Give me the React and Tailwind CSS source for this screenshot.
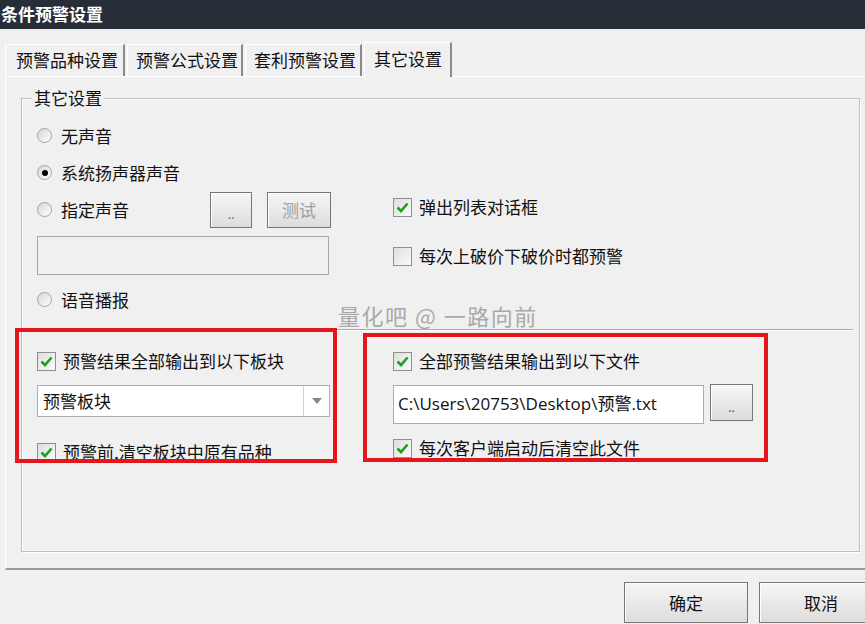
import React from "react";

const FONT = { fontFamily: '"Noto Sans CJK SC", "Noto Sans", sans-serif' };

const Radio = ({ checked, label }) => (
  <div className="flex items-center h-[37px]">
    <span className="w-[15px] h-[15px] rounded-full border border-[#a3a3a3] bg-gradient-to-br from-[#d6d6d6] to-white flex items-center justify-center">
      {checked && <span className="w-[6px] h-[6px] rounded-full bg-black" />}
    </span>
    <span className="ml-[9px] text-[17px] text-[#111]">{label}</span>
  </div>
);

const Check = ({ checked, label }) => (
  <div className="flex items-center h-[30px]">
    <span className="w-[19px] h-[19px] border border-[#8e8f8f] bg-gradient-to-br from-[#dedede] to-[#fbfbfb] flex items-center justify-center">
      {checked && (
        <svg width="13" height="11" viewBox="0 0 13 11">
          <path d="M1.5 5.5 L5 9 L11.5 1.5" fill="none" stroke="#1f9e1f" strokeWidth="2.6" />
        </svg>
      )}
    </span>
    <span className="ml-[7px] text-[17px] text-[#111]">{label}</span>
  </div>
);

const Btn = ({ children, className }) => (
  <button className={`border border-[#767676] bg-gradient-to-b from-[#f6f6f6] to-[#dddddd] shadow-[inset_1px_1px_0_#fff] flex items-center justify-center ${className}`}>
    {children}
  </button>
);

const tabs = [
  { label: "预警品种设置", w: "w-[120px]", pl: "pl-[10px]" },
  { label: "预警公式设置", w: "w-[116px]", pl: "pl-[8px]" },
  { label: "套利预警设置", w: "w-[117px]", pl: "pl-[8px]" },
];

const App = () => {
  return (
    <div className="relative w-[865px] h-[624px] bg-[#f0f0f0] overflow-hidden" style={FONT}>
      {/* TITLE */}
      <div className="h-[29px] bg-[#272e38] text-white font-bold text-[17px] leading-[28px] pl-[1px]">
        条件预警设置
      </div>

      {/* TABS */}
      <div className="flex items-end h-[47px] pl-[5px]">
        {tabs.map((t) => (
          <div
            key={t.label}
            className={`${t.w} ${t.pl} h-[32px] mr-[2px] border-t border-l border-white border-r-2 border-r-[#8a8a8a] text-[17px] leading-[30px] text-[#111] whitespace-nowrap`}
          >
            {t.label}
          </div>
        ))}
        <div className="w-[88px] pl-[9px] h-[35px] bg-[#f0f0f0] border-t border-l border-white border-r-2 border-r-[#8a8a8a] text-[17px] leading-[32px] text-[#111] -mb-px relative z-10 whitespace-nowrap">
          其它设置
        </div>
      </div>

      {/* PANEL */}
      <div className="ml-[5px] h-[494px] border-t border-l border-white border-b-2 border-b-[#9a9a9a] pt-[21px] pl-[15px]">
        <div className="relative w-[839px] h-[454px] border border-[#bdbdbd] shadow-[inset_1px_1px_0_#fff,1px_1px_0_#fff]">
          <span className="absolute -top-[11px] left-[10px] px-[2px] bg-[#f0f0f0] text-[17px] leading-[20px] text-[#111]">
            其它设置
          </span>

          {/* TOP SECTION */}
          <div className="flex pt-[18px]">
            <div className="w-[371px] pl-[15px]">
              <Radio label="无声音" />
              <Radio checked label="系统扬声器声音" />
              <div className="flex items-center h-[37px]">
                <div className="w-[173px]">
                  <Radio label="指定声音" />
                </div>
                <Btn className="w-[42px] h-[36px] text-[12px] text-[#666] pt-[8px]">..</Btn>
                <Btn className="ml-[15px] w-[64px] h-[36px] text-[17px] text-[#a0a0a0]">测试</Btn>
              </div>
              <div className="mt-[8px] w-[292px] h-[39px] border border-[#a8a8a8] bg-[#f0f0f0]" />
              <div className="mt-[6px]">
                <Radio label="语音播报" />
              </div>
            </div>
            <div className="pt-[75px]">
              <Check checked label="弹出列表对话框" />
              <div className="mt-[19px]">
                <Check label="每次上破价下破价时都预警" />
              </div>
            </div>
          </div>

          {/* SEPARATOR */}
          <div className="mt-[11px] w-[831px] border-t border-[#a9a9a9] border-b border-b-white" />

          {/* BOTTOM SECTION */}
          <div className="flex pt-[15px]">
            <div className="w-[371px] pl-[15px]">
              <Check checked label="预警结果全部输出到以下板块" />
              <div className="mt-[9px] w-[293px] h-[32px] flex border border-[#acacac] bg-white">
                <span className="flex-1 pl-[5px] text-[17px] leading-[30px] text-[#111]">预警板块</span>
                <span className="w-[26px] border-l border-[#d0d0d0] flex items-center justify-center">
                  <svg width="10" height="6" viewBox="0 0 10 6">
                    <path d="M0 0 H10 L5 6 Z" fill="#8a8a8a" />
                  </svg>
                </span>
              </div>
              <div className="mt-[20px]">
                <Check checked label="预警前,清空板块中原有品种" />
              </div>
            </div>
            <div>
              <Check checked label="全部预警结果输出到以下文件" />
              <div className="mt-[9px] flex items-start">
                <div className="w-[311px] h-[39px] border border-[#acacac] bg-white pl-[4px] text-[17px] leading-[36px] text-[#111]" style={{ fontFamily: '"Open Sans", "Noto Sans CJK SC", sans-serif' }}>
                  C:\Users\20753\Desktop\预警.txt
                </div>
                <Btn className="ml-[6px] -mt-px w-[43px] h-[37px] text-[12px] text-[#555] pt-[8px]">..</Btn>
              </div>
              <div className="mt-[9px]">
                <Check checked label="每次客户端启动后清空此文件" />
              </div>
            </div>
          </div>
        </div>
      </div>

      {/* BUTTONS */}
      <div className="flex pl-[624px] mt-[12px] gap-[11px]">
        <Btn className="shrink-0 w-[124px] h-[41px] text-[17px] text-[#111]">确定</Btn>
        <Btn className="shrink-0 w-[124px] h-[41px] text-[17px] text-[#111]">取消</Btn>
      </div>

      {/* WATERMARK */}
      <div className="absolute left-[338px] top-[299px] text-[22px] text-[#a9a9a9] tracking-[1.5px] whitespace-pre">
        量化吧 @ 一路向前
      </div>

      {/* RED ANNOTATIONS */}
      <div className="absolute left-[15px] top-[328px] w-[322px] h-[135px] border-[4px] border-[#e5161b]" />
      <div className="absolute left-[363px] top-[333px] w-[405px] h-[129px] border-[4px] border-[#e5161b]" />
    </div>
  );
};

export default App;
